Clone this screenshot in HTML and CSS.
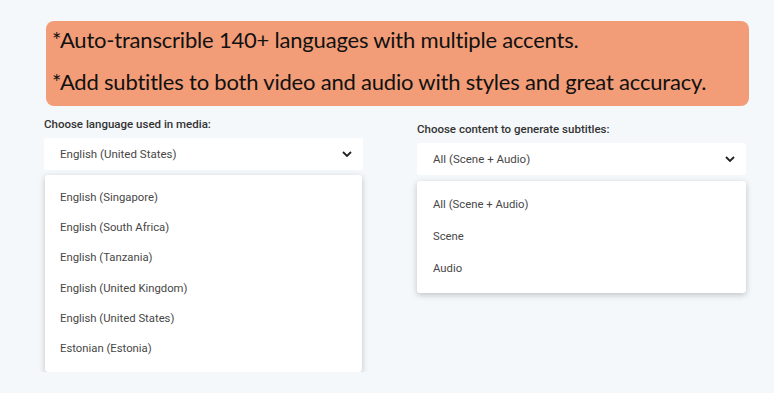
FILE: index.html
```html
<!DOCTYPE html>
<html lang="en">
  <head>
    <meta charset="UTF-8" />
    <meta name="viewport" content="width=device-width, initial-scale=1.0" />
    <title>Auto Subtitles</title>
    <link rel="stylesheet" href="styles.css">
  </head>
  <body>
    <div class="container">
      <!-- Feature banner -->
      <div class="banner">
        <p>*Auto-transcrible 140+ languages with multiple accents.</p>
        <p>*Add subtitles to both video and audio with styles and great accuracy.</p>
      </div>

      <div class="fields">
        <!-- Language select -->
        <div class="field">
          <label class="field-label">Choose language used in media:</label>
          <div class="select">
            <span>English (United States)</span>
            <svg class="chevron" width="10" height="6" viewBox="0 0 10 6">
              <path d="M1 1l4 4 4-4" fill="none" stroke="#222" stroke-width="1.8" />
            </svg>
          </div>
          <ul class="menu">
            <li>English (Singapore)</li>
            <li>English (South Africa)</li>
            <li>English (Tanzania)</li>
            <li>English (United Kingdom)</li>
            <li>English (United States)</li>
            <li>Estonian (Estonia)</li>
          </ul>
        </div>

        <!-- Content select -->
        <div class="field field-right">
          <label class="field-label">Choose content to generate subtitles:</label>
          <div class="select">
            <span>All (Scene + Audio)</span>
            <svg class="chevron" width="10" height="6" viewBox="0 0 10 6">
              <path d="M1 1l4 4 4-4" fill="none" stroke="#222" stroke-width="1.8" />
            </svg>
          </div>
          <ul class="menu menu-wide">
            <li>All (Scene + Audio)</li>
            <li>Scene</li>
            <li>Audio</li>
          </ul>
        </div>
      </div>
    </div>
  </body>
</html>
```
FILE: styles.css
```css
body {
  margin: 0;
  background-color: #f5f8fb;
  font-family: Roboto, "Liberation Sans", sans-serif;
  color: #333;
}

.container {
  padding: 21px 25px 0 44px;
}

.banner {
  margin-left: 2px;
  width: 703px;
  height: 85px;
  box-sizing: border-box;
  background-color: #f29d77;
  border-radius: 8px;
  padding: 5px 0 0 6px;
  font-family: Lato, "Open Sans", sans-serif;
  font-size: 22px;
  letter-spacing: -0.2px;
  white-space: nowrap;
  color: #111;
}

.banner p {
  margin: 0;
  line-height: 28px;
}

.banner p + p {
  margin-top: 14px;
}

.fields {
  display: grid;
  grid-template-columns: 319px 329px;
  column-gap: 54px;
  margin-top: 10px;
}

.field-right {
  margin-top: 5px;
}

.field-label {
  display: block;
  font-size: 11.5px;
  font-weight: 500;
  color: #333;
  line-height: 16px;
  margin-bottom: 6px;
}

.select {
  display: flex;
  align-items: center;
  justify-content: space-between;
  height: 32px;
  padding: 0 11px 0 16px;
  background-color: white;
  border-radius: 3px;
  font-size: 11.5px;
  color: #474747;
}

.chevron {
  display: block;
}

.menu {
  list-style: none;
  margin: 5px 1px 0 1px;
  padding: 8px 0 8px;
  background-color: white;
  border-radius: 3px;
  box-shadow: 0 2px 6px rgba(0, 0, 0, 0.22);
  font-size: 11.3px;
  color: #474747;
}

.menu li {
  height: 30.2px;
  line-height: 30px;
  padding-left: 15px;
}

.menu-wide {
  margin: 6px 0 0 0;
  padding: 8px 0 8px;
}

.menu-wide li {
  height: 32px;
  line-height: 32px;
  padding-left: 16px;
}
```
